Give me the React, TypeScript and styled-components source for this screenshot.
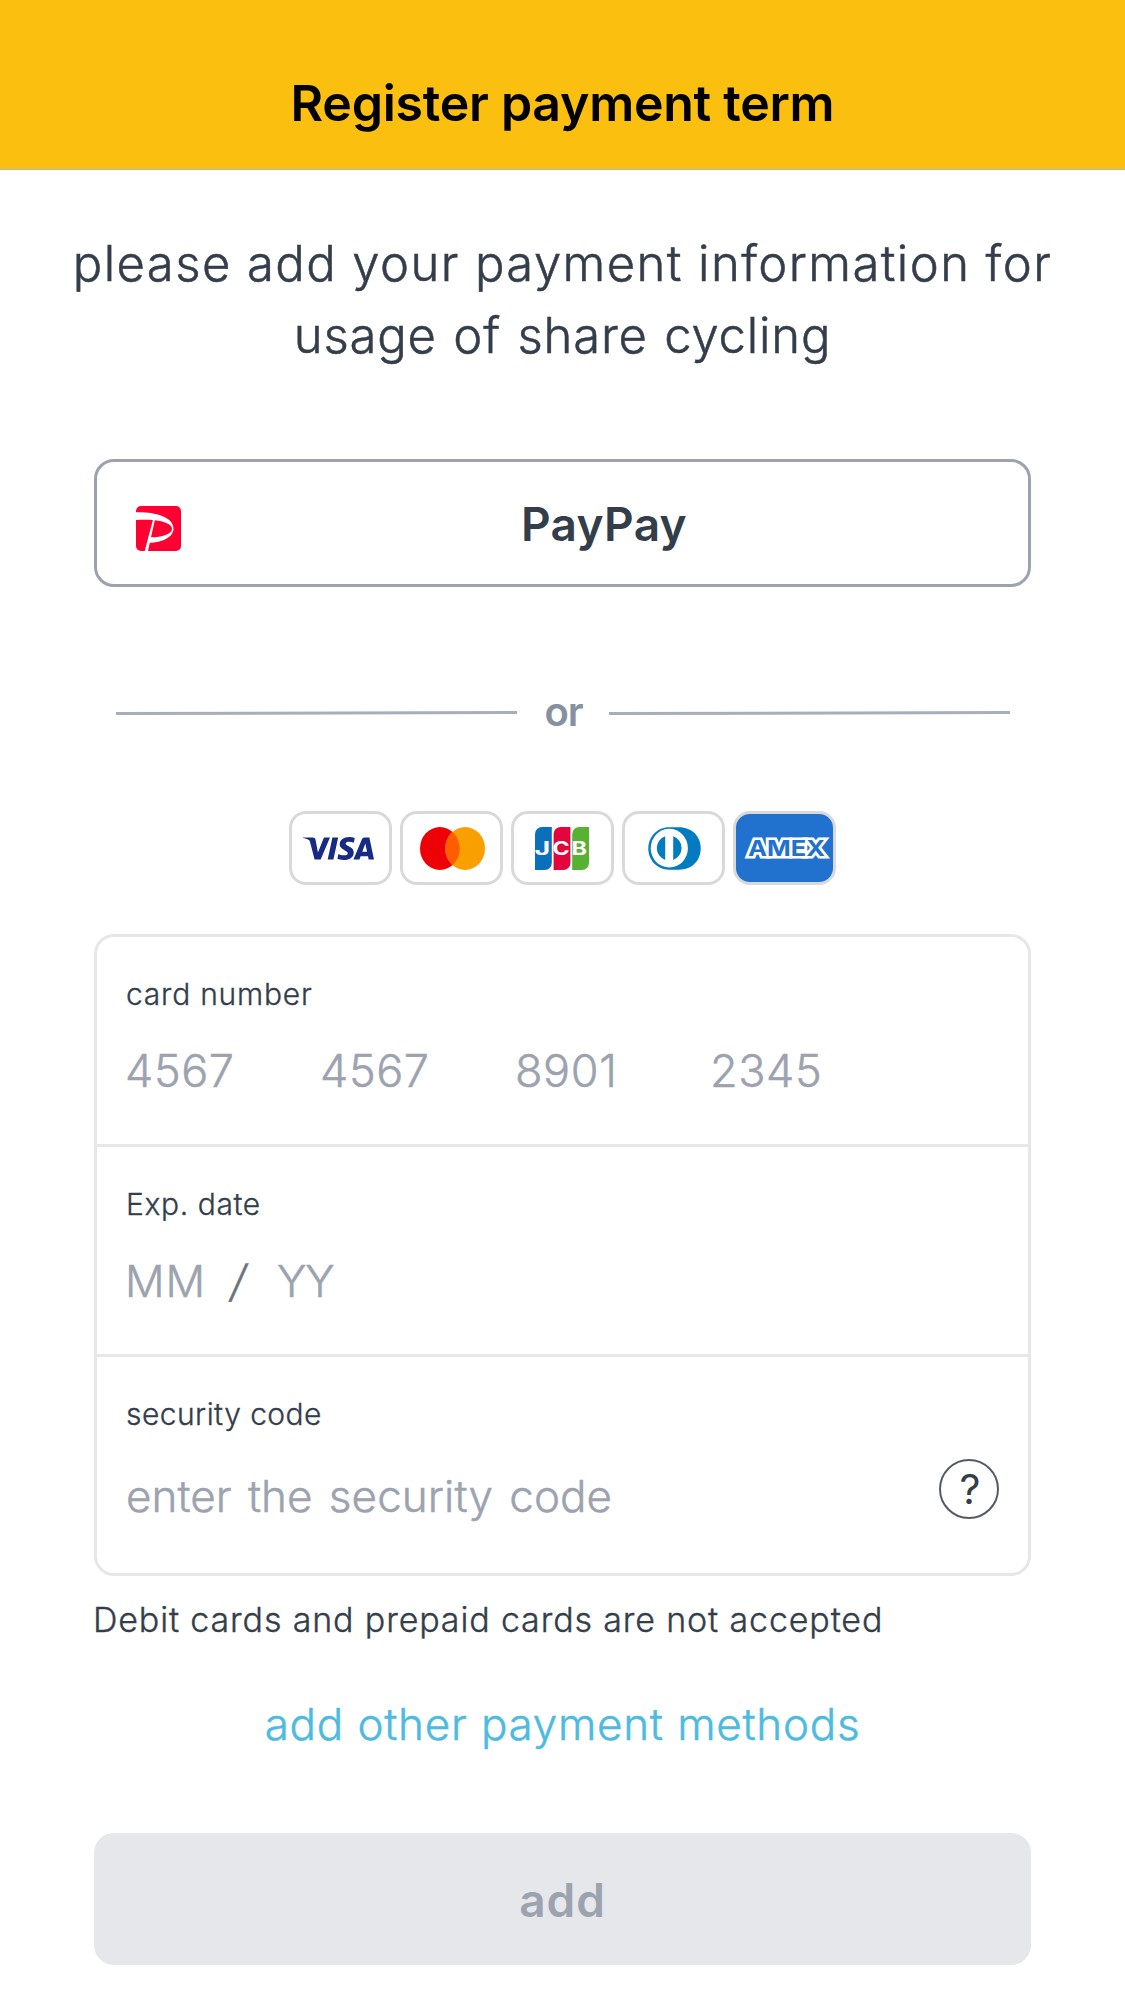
import React from 'react';
import styled, { createGlobalStyle, css } from 'styled-components';
import { SiVisa } from 'react-icons/si';

const ink = '#343e4b';
const muted = '#9ca3af';
const line = '#e5e7eb';

// Light cut with slightly reinforced stems.
const light = css`
  font-weight: 300;
  -webkit-text-stroke: 0.011em currentColor;
`;

const GlobalStyle = createGlobalStyle`
  * { box-sizing: border-box; }
  body {
    margin: 0;
    background: #fff;
    color: ${ink};
    font-family: Inter, 'Liberation Sans', 'Noto Sans CJK JP', sans-serif;
  }
`;

const Screen = styled.div`
  width: 1125px;
  height: 2000px;
  display: flex;
  flex-direction: column;
  overflow: hidden;
`;

const Header = styled.header`
  height: 170px;
  padding-top: 73px;
  background: #fabf0f;
  border-bottom: 1px solid #b5b5a6;
  text-align: center;
`;

const Title = styled.h1`
  margin: 0;
  color: #000;
  font-size: 50px;
  line-height: 60px;
  font-weight: 600;
  letter-spacing: -0.25px;
`;

const Main = styled.main`
  display: flex;
  flex-direction: column;
  padding: 0 94px;
`;

const Intro = styled.p`
  margin: 58px -60px 0;
  text-align: center;
`;

const IntroLine = styled.span<{ $spacing: number; $words?: number }>`
  ${light}
  display: block;
  font-size: 49px;
  line-height: 72px;
  letter-spacing: ${p => p.$spacing}px;
  word-spacing: ${p => p.$words ?? 0}px;
`;

const PayPayButton = styled.button`
  display: flex;
  align-items: center;
  width: 937px;
  height: 128px;
  margin-top: 87px;
  padding: 0 1px 0 39px;
  border: 3px solid ${muted};
  border-radius: 20px;
  background: #fff;
  color: ${ink};
  font-family: inherit;
`;

const PayPayMark = styled.svg`
  width: 45px;
  height: 45px;
  margin-top: 11px;
`;

const PayPayLabel = styled.span`
  flex: 1;
  padding-top: 2px;
  text-align: center;
  font-size: 46px;
  line-height: 60px;
  font-weight: 600;
  letter-spacing: 0.3px;
`;

const Divider = styled.div`
  display: flex;
  align-items: center;
  height: 48px;
  margin: 102px 21px 0 22px;
`;

const Rule = styled.svg`
  width: 401px;
  height: 6px;
  flex: none;
`;

const DividerLabel = styled.span`
  flex: 1;
  padding: 0 0 3px 1px;
  text-align: center;
  color: #8690a0;
  font-size: 40px;
  line-height: 42px;
  font-weight: 600;
  letter-spacing: -1px;
`;

const Brands = styled.div`
  display: flex;
  justify-content: center;
  gap: 8px;
  margin-top: 74px;
`;

const Brand = styled.div<{ $fill?: string; $left?: number; $right?: number }>`
  display: flex;
  align-items: center;
  justify-content: center;
  width: 103px;
  height: 74px;
  padding: 0 ${p => p.$right ?? 0}px 0 ${p => p.$left ?? 0}px;
  border: 3px solid #d9d9d9;
  border-radius: 17px;
  background: ${p => p.$fill ?? '#fff'};
`;

const Logo = styled.svg<{ $w: number; $h: number }>`
  width: ${p => p.$w}px;
  height: ${p => p.$h}px;
  flex: none;
`;

const Form = styled.section`
  width: 937px;
  margin-top: 49px;
  border: 3px solid ${line};
  border-radius: 20px;
`;

const Field = styled.div<{ $height: number }>`
  height: ${p => p.$height}px;
  padding: 37px 29px 0 29px;
  & + & { border-top: 3px solid ${line}; }
`;

const Label = styled.div<{ $spacing: number }>`
  ${light}
  font-size: 30px;
  line-height: 40px;
  letter-spacing: ${p => p.$spacing}px;
`;

const NumberGroups = styled.div`
  ${light}
  display: grid;
  grid-template-columns: repeat(4, 195px);
  margin: 27px 0 0 -1px;
  color: ${muted};
  font-size: 45px;
  line-height: 60px;
  letter-spacing: 0.6px;
`;

const Expiry = styled.div`
  ${light}
  display: flex;
  margin-top: 27px;
  color: ${muted};
  font-size: 44px;
  line-height: 60px;
`;

const Month = styled.span`
  width: 106px;
  margin-left: -1px;
  letter-spacing: 1px;
`;

const Slash = styled.span`
  width: 46px;
  color: #6b7280;

  span {
    display: inline-block;
    transform: skewX(-10deg);
  }
`;

const Year = styled.span`
  letter-spacing: -1px;
`;

const CodeRow = styled.div`
  display: flex;
  justify-content: space-between;
  align-items: flex-start;
  margin-top: 25px;
`;

const Placeholder = styled.span`
  ${light}
  margin-top: 7px;
  color: ${muted};
  font-size: 44px;
  line-height: 60px;
  letter-spacing: 0.05px;
  word-spacing: 3.8px;
`;

const Help = styled.button`
  display: flex;
  align-items: center;
  justify-content: center;
  width: 60px;
  height: 60px;
  padding: 0 0 0 2px;
  border: 2px solid #555a66;
  border-radius: 50%;
  background: #fff;
  color: ${ink};
  font-family: inherit;
  font-size: 41px;
  line-height: 56px;
  font-weight: 400;
`;

const Note = styled.p`
  ${light}
  margin: 20px 0 0 -1px;
  font-size: 34px;
  line-height: 48px;
  letter-spacing: 0.85px;
  white-space: nowrap;
`;

const OtherLink = styled.a`
  ${light}
  margin-top: 50px;
  color: #4cbbdf;
  font-size: 44px;
  line-height: 60px;
  text-align: center;
  letter-spacing: 0.7px;
  word-spacing: 0.5px;
`;

const AddButton = styled.button`
  width: 937px;
  height: 132px;
  margin-top: 79px;
  padding: 2px 0 0;
  border: 0;
  border-radius: 20px;
  background: ${line};
  color: ${muted};
  font-family: inherit;
  font-size: 46px;
  font-weight: 600;
  letter-spacing: 0.9px;
`;

const SlopedRule = () => (
  <Rule viewBox="0 0 401 6">
    <line x1="0" y1="3.6" x2="401" y2="2.4" stroke="#a9adba" strokeWidth="3" />
  </Rule>
);

const jcbBars = [
  { letter: 'J', x: 0, color: '#0a70bb', textX: -0.4, stretch: 1.45 },
  { letter: 'C', x: 18.6, color: '#e3063c', textX: 17.6, stretch: 1.25 },
  { letter: 'B', x: 37.2, color: '#57b233', textX: 36.6, stretch: 1.26 },
];

const groups = ['4567', '4567', '8901', '2345'];

export default function App() {
  return (
    <Screen>
      <GlobalStyle />
      <Header>
        <Title>Register payment term</Title>
      </Header>
      <Main>
        <Intro>
          <IntroLine $spacing={1.42}>please add your payment information for</IntroLine>
          <IntroLine $spacing={0.8} $words={2}>usage of share cycling</IntroLine>
        </Intro>

        <PayPayButton>
          <PayPayMark viewBox="0 0 45 45">
            <rect width="45" height="45" rx="5" fill="#ff0033" />
            <path
              fill="#fff"
              fillRule="evenodd"
              d="M0 6.3C15 5.5 37.5 9.5 37.5 22.7C37.5 31 26 36.5 13.8 36.7L12 45H8.7L16.9 14.1C11 13.4 5 13.6 0 14ZM18.8 14.3C28 15.4 36 18 36 23C36 28 26 31.3 15 31.3Z"
            />
          </PayPayMark>
          <PayPayLabel>PayPay</PayPayLabel>
        </PayPayButton>

        <Divider>
          <SlopedRule />
          <DividerLabel>or</DividerLabel>
          <SlopedRule />
        </Divider>

        <Brands>
          <Brand $right={4}>
            <SiVisa size={71} color="#172b85" />
          </Brand>
          <Brand $left={1}>
            <Logo $w={65} $h={43} viewBox="0 0 65 43">
              <defs>
                <clipPath id="left-disc">
                  <ellipse cx="19.9" cy="21.5" rx="19.9" ry="21.5" />
                </clipPath>
              </defs>
              <ellipse cx="19.9" cy="21.5" rx="19.9" ry="21.5" fill="#ed0006" />
              <ellipse cx="45.1" cy="21.5" rx="19.9" ry="21.5" fill="#f9a000" />
              <ellipse cx="45.1" cy="21.5" rx="19.9" ry="21.5" fill="#ff5e00" clipPath="url(#left-disc)" />
            </Logo>
          </Brand>
          <Brand $right={1}>
            <Logo $w={54} $h={43} viewBox="0 0 54 43">
              {jcbBars.map(b => (
                <g key={b.letter}>
                  <path
                    fill={b.color}
                    d={`M${b.x} 43V7a7 7 0 0 1 7-7h9.8V36a7 7 0 0 1-7 7Z`}
                  />
                  <text
                    transform={`translate(${b.textX} 28) scale(${b.stretch} 1)`}
                    fontFamily="Inter, sans-serif"
                    fontWeight="700"
                    fontSize="18.5"
                    fill="#fff"
                  >
                    {b.letter}
                  </text>
                </g>
              ))}
            </Logo>
          </Brand>
          <Brand $left={2}>
            <Logo $w={53} $h={43} viewBox="0 0 53 43">
              <path
                fill="#027bc1"
                d="M21 .3H31C44 .3 52.7 9.5 52.7 21.5S44 42.7 31 42.7H21C9 42.7 .3 33 .3 21.5S9 .3 21 .3Z"
              />
              <ellipse cx="21.3" cy="21.2" rx="18.6" ry="19.4" fill="#fff" />
              <path fill="#027bc1" d="M17.2 9.3V32.9A12.5 12.5 0 0 1 17.2 9.3ZM25.2 9.3A12.5 12.5 0 0 1 25.2 32.9Z" />
            </Logo>
          </Brand>
          <Brand $fill="#2172cf">
            <Logo $w={90} $h={30} viewBox="0 0 90 30">
              <text
                x="8"
                y="22.5"
                textLength="77"
                lengthAdjust="spacingAndGlyphs"
                fontFamily="Inter, sans-serif"
                fontWeight="700"
                fontSize="22"
                fill="#2172cf"
                stroke="#fff"
                strokeWidth="5"
                paintOrder="stroke"
              >
                AMEX
              </text>
            </Logo>
          </Brand>
        </Brands>

        <Form>
          <Field $height={207}>
            <Label $spacing={0.77}>card number</Label>
            <NumberGroups>
              {groups.map((g, i) => (
                <span key={i}>{g}</span>
              ))}
            </NumberGroups>
          </Field>
          <Field $height={210}>
            <Label $spacing={0.6}>Exp. date</Label>
            <Expiry>
              <Month>MM</Month>
              <Slash>
                <span>/</span>
              </Slash>
              <Year>YY</Year>
            </Expiry>
          </Field>
          <Field $height={219}>
            <Label $spacing={0.45}>security code</Label>
            <CodeRow>
              <Placeholder>enter the security code</Placeholder>
              <Help>?</Help>
            </CodeRow>
          </Field>
        </Form>

        <Note>Debit cards and prepaid cards are not accepted</Note>
        <OtherLink>add other payment methods</OtherLink>
        <AddButton>add</AddButton>
      </Main>
    </Screen>
  );
}
